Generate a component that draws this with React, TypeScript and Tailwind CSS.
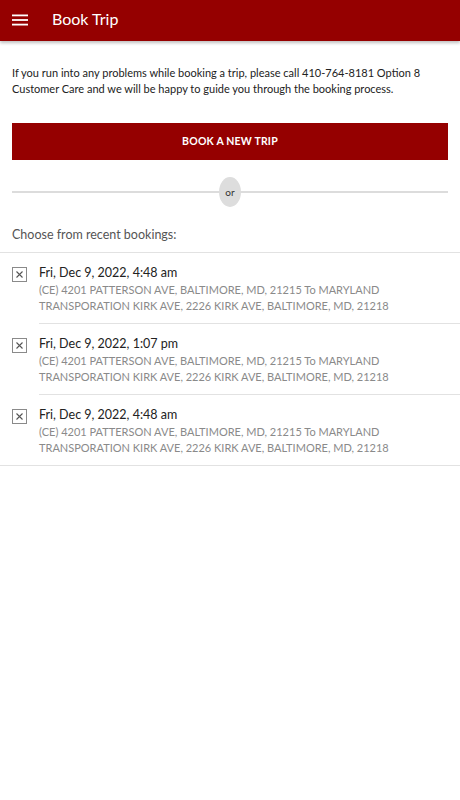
import React from "react";

const bookings = [
  { date: "Fri, Dec 9, 2022, 4:48 am" },
  { date: "Fri, Dec 9, 2022, 1:07 pm" },
  { date: "Fri, Dec 9, 2022, 4:48 am" },
];

function XBox() {
  return (
    <svg width="15" height="15" viewBox="0 0 15 15" className="shrink-0">
      <rect x="0.5" y="0.5" width="14" height="14" fill="none" stroke="#8a8a8a" strokeWidth="1" />
      <path d="M4.5 4.5 L10.5 10.5 M10.5 4.5 L4.5 10.5" stroke="#555" strokeWidth="1.1" />
    </svg>
  );
}

export default function App() {
  return (
    <div className="w-[460px] min-h-[800px] bg-white" style={{ fontFamily: "Lato, 'Open Sans', sans-serif" }}>
      <header className="h-[41px] bg-[#950000] flex items-center shadow-[0_2px_3px_rgba(0,0,0,0.25)] relative">
        <div className="w-[52px] flex pl-[12px] -mt-[2px]">
          <svg width="16" height="12" viewBox="0 0 16 12">
            <rect x="0" y="0.5" width="16" height="1.8" fill="#fff" />
            <rect x="0" y="5.1" width="16" height="1.8" fill="#fff" />
            <rect x="0" y="9.7" width="16" height="1.8" fill="#fff" />
          </svg>
        </div>
        <span className="text-white text-[16px] -mt-[4px]">Book Trip</span>
      </header>
      <p className="px-[12px] pt-[24px] text-[11px] leading-[16px] text-[#222]">
        If you run into any problems while booking a trip, please call 410-764-8181 Option 8 Customer Care and we will be happy to guide you through the booking process.
      </p>
      <div className="px-[12px] pt-[26px]">
        <button className="w-full h-[37px] bg-[#950000] text-white text-[10.5px] font-bold tracking-[0.2px]">
          BOOK A NEW TRIP
        </button>
      </div>
      <div className="px-[12px] pt-[17px] relative">
        <div className="relative h-[30px] flex items-center justify-center">
          <div className="absolute left-0 right-0 top-[14px] h-[2px] bg-[#dcdcdc]" />
          <div className="relative w-[22px] h-[30px] rounded-[50%] bg-[#dddddd] flex items-center justify-center text-[10px] text-[#333]">or</div>
        </div>
      </div>
      <p className="px-[12px] pt-[19px] pb-[8px] text-[12.5px] text-[#555] leading-[18px]">Choose from recent bookings:</p>
      <div className="border-t-[1.5px] border-[#e2e2e2]">
        {bookings.map((b, i) => (
          <div key={i} className="flex">
            <div className="w-[39px] pl-[12px] pt-[14px]">
              <XBox />
            </div>
            <div className={`flex-1 pt-[11px] pb-[10px] ${i < bookings.length - 1 ? "border-b-[1.5px] border-[#e2e2e2]" : ""}`}>
              <div className="text-[12.5px] leading-[18px] text-[#222]">{b.date}</div>
              <div className="text-[11px] leading-[15.5px] text-[#8a8a8a]">
                (CE) 4201 PATTERSON AVE, BALTIMORE, MD, 21215 To MARYLAND
                <br />
                TRANSPORATION KIRK AVE, 2226 KIRK AVE, BALTIMORE, MD, 21218
              </div>
            </div>
          </div>
        ))}
      </div>
      <div className="border-t-[1.5px] border-[#e2e2e2]" />
    </div>
  );
}
